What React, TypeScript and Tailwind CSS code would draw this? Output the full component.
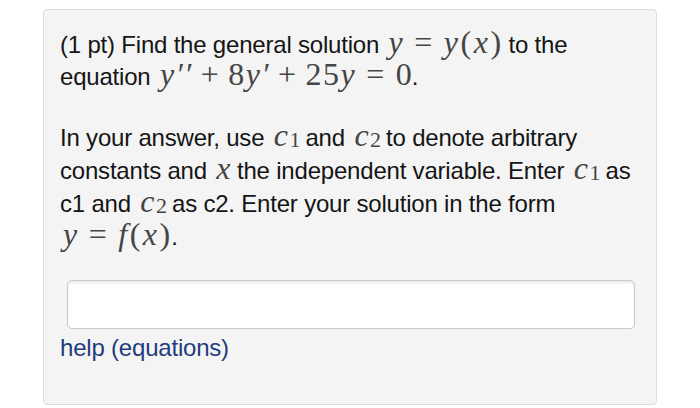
import React from "react";

function M({ children }: { children: React.ReactNode }) {
  return (
    <span className="ml-[3px] -mr-[1.5px] font-['Liberation_Serif',serif] text-[32px] leading-[0] italic tracking-[1.5px] text-[#454545]">
      {children}
    </span>
  );
}

// relation / binary operators with TeX-like spacing
function Rel({ children }: { children: React.ReactNode }) {
  return <span className="not-italic mx-[10px]">{children}</span>;
}

function Bin({ children }: { children: React.ReactNode }) {
  return <span className="not-italic mx-[8px]">{children}</span>;
}

function N({ children }: { children: React.ReactNode }) {
  return <span className="not-italic">{children}</span>;
}

function P({ children }: { children: React.ReactNode }) {
  return <span className="not-italic mx-[1px]">{children}</span>;
}

function C({ n }: { n: string }) {
  return (
    <M>
      c<sub className="not-italic text-[22px] tracking-normal relative top-[1px]">{n}</sub>
    </M>
  );
}

export default function App() {
  return (
    <div className="w-[700px] h-[408px] bg-white pt-[9px] pl-[43px] font-['Liberation_Sans',Arial,sans-serif] text-[#151515]">
      <div className="w-[614px] h-[396px] rounded-[4px] border border-[#dcdcdc] bg-[#f4f4f4] pt-[19px] px-[16px]">
        <p className="whitespace-nowrap text-[24px] leading-[32px] tracking-[-0.2px]">
          (1 pt) Find the general solution{" "}
          <M>
            y<Rel>=</Rel>y<P>(</P>x<P>)</P>
          </M>{" "}
          to the
          <br />
          equation{" "}
          <M>
            y′′<Bin>+</Bin>
            <N>8</N>y′<Bin>+</Bin>
            <N>25</N>y<Rel>=</Rel>
            <N>0</N>
          </M>
          .
        </p>
        <p className="mt-[28px] whitespace-nowrap text-[24px] leading-[33px] tracking-[-0.2px]">
          In your answer, use <C n="1" /> and <C n="2" /> to denote arbitrary
          <br />
          constants and <M>x</M> the independent variable. Enter <C n="1" /> as
          <br />
          c1 and <C n="2" /> as c2. Enter your solution in the form
          <br />
          <M>
            y<Rel>=</Rel>f<P>(</P>x<P>)</P>
          </M>
          .
        </p>
        <div className="mt-[27px] ml-[7px] w-[568px] h-[49px] rounded-[5px] border border-[#c8c8c8] bg-white shadow-[inset_0_2px_2px_rgba(0,0,0,0.08)]" />
        <a href="#" className="mt-[2px] block text-[24px] leading-[33px] tracking-[-0.2px] text-[#1f3c7c]">
          help (equations)
        </a>
      </div>
    </div>
  );
}
